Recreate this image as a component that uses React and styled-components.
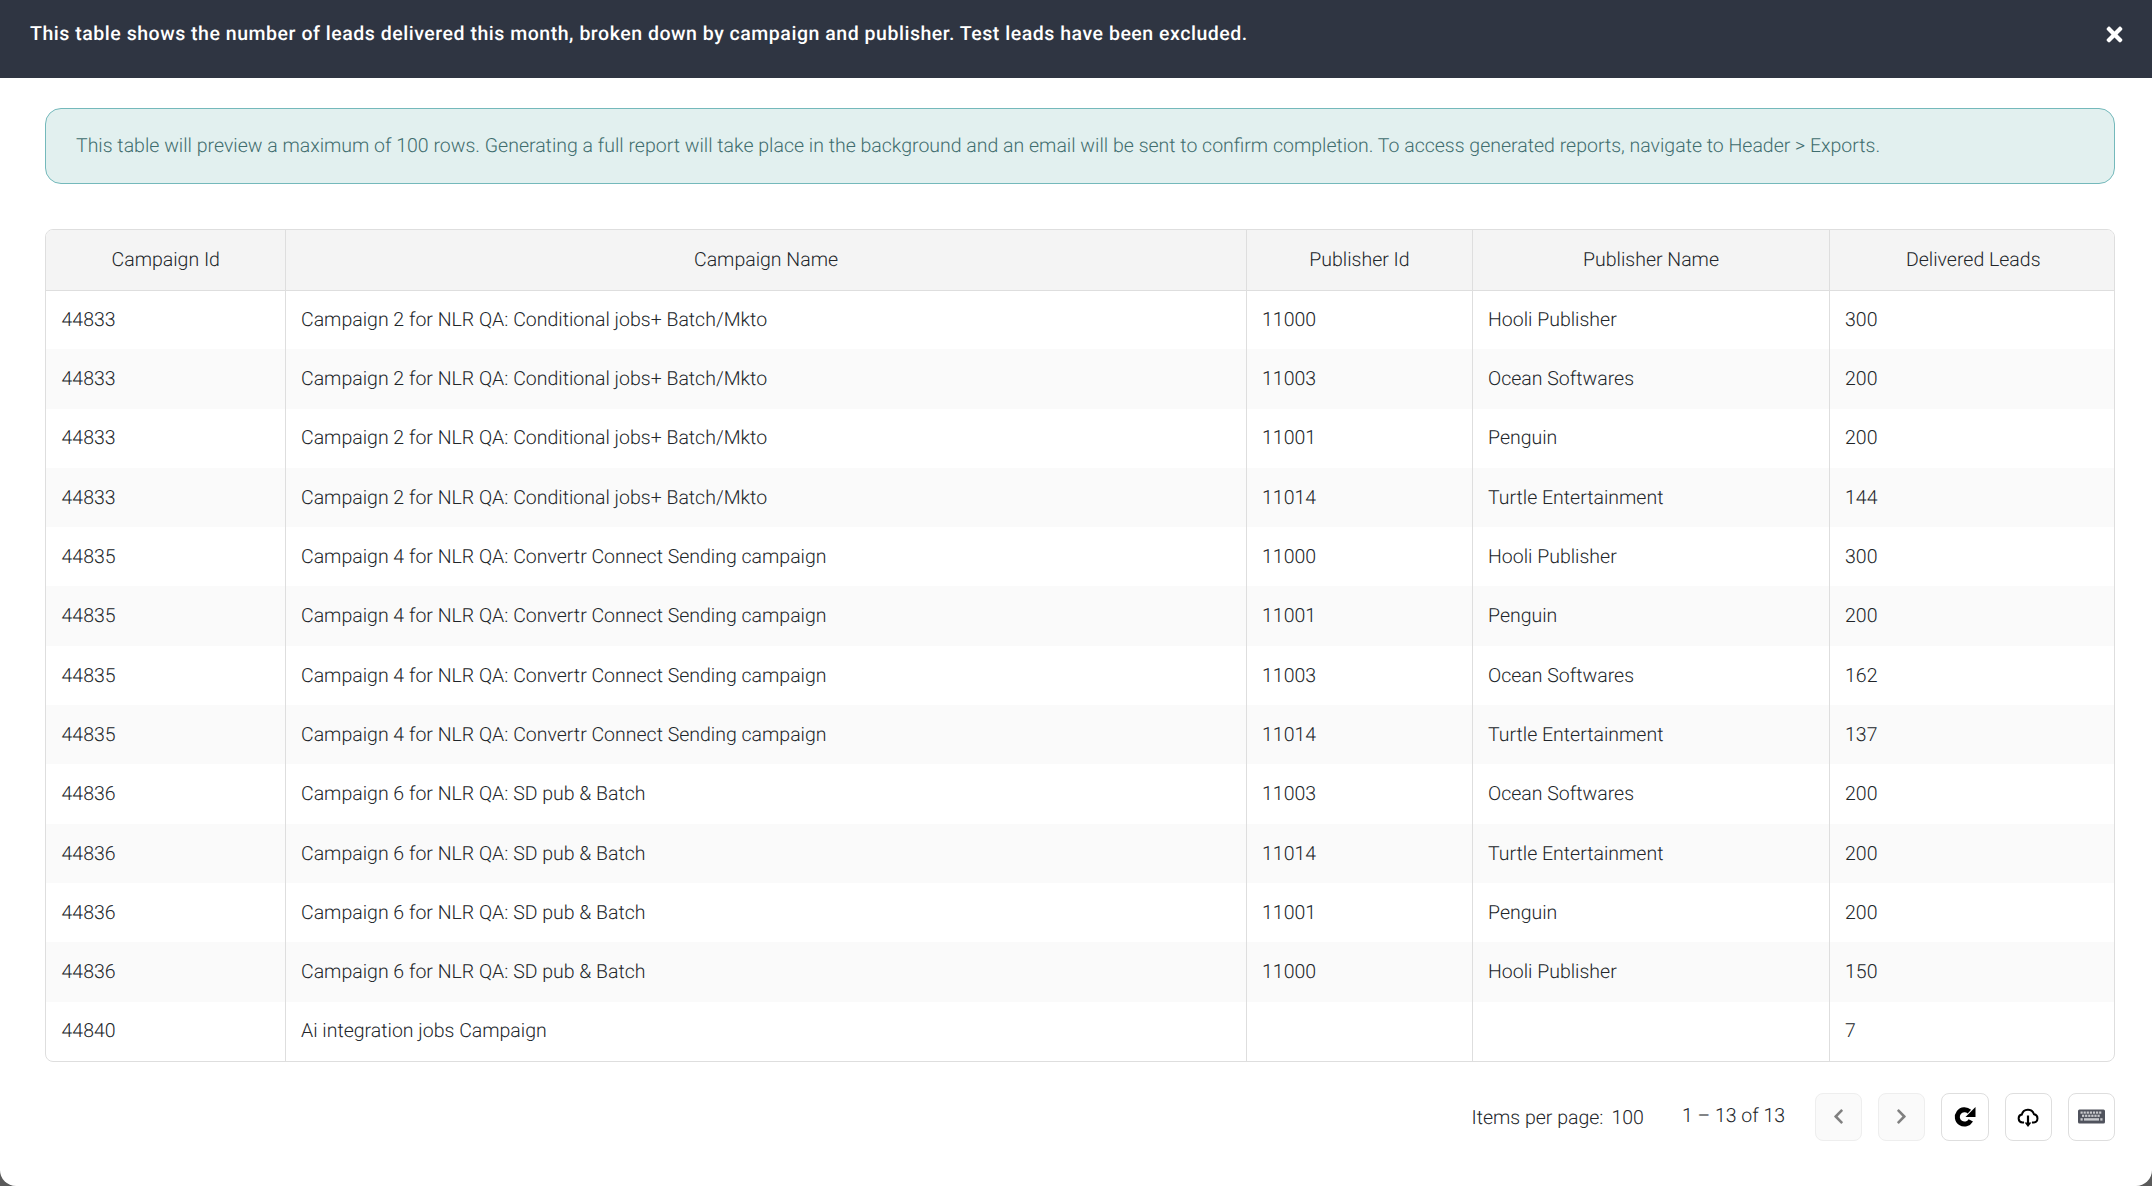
import React from 'react'
import styled, { createGlobalStyle } from 'styled-components'
import { FaTimes, FaChevronLeft, FaChevronRight } from 'react-icons/fa'

const rows = [
  ['44833', 'Campaign 2 for NLR QA: Conditional jobs+ Batch/Mkto', '11000', 'Hooli Publisher', '300'],
  ['44833', 'Campaign 2 for NLR QA: Conditional jobs+ Batch/Mkto', '11003', 'Ocean Softwares', '200'],
  ['44833', 'Campaign 2 for NLR QA: Conditional jobs+ Batch/Mkto', '11001', 'Penguin', '200'],
  ['44833', 'Campaign 2 for NLR QA: Conditional jobs+ Batch/Mkto', '11014', 'Turtle Entertainment', '144'],
  ['44835', 'Campaign 4 for NLR QA: Convertr Connect Sending campaign', '11000', 'Hooli Publisher', '300'],
  ['44835', 'Campaign 4 for NLR QA: Convertr Connect Sending campaign', '11001', 'Penguin', '200'],
  ['44835', 'Campaign 4 for NLR QA: Convertr Connect Sending campaign', '11003', 'Ocean Softwares', '162'],
  ['44835', 'Campaign 4 for NLR QA: Convertr Connect Sending campaign', '11014', 'Turtle Entertainment', '137'],
  ['44836', 'Campaign 6 for NLR QA: SD pub & Batch', '11003', 'Ocean Softwares', '200'],
  ['44836', 'Campaign 6 for NLR QA: SD pub & Batch', '11014', 'Turtle Entertainment', '200'],
  ['44836', 'Campaign 6 for NLR QA: SD pub & Batch', '11001', 'Penguin', '200'],
  ['44836', 'Campaign 6 for NLR QA: SD pub & Batch', '11000', 'Hooli Publisher', '150'],
  ['44840', 'Ai integration jobs Campaign', '', '', '7'],
]

const columns = [
  { title: 'Campaign Id', width: 239 },
  { title: 'Campaign Name', width: 961 },
  { title: 'Publisher Id', width: 226 },
  { title: 'Publisher Name', width: 357 },
  { title: 'Delivered Leads', width: 287 },
]

const GlobalStyle = createGlobalStyle`
  html, body {
    margin: 0;
    padding: 0;
    background: #5a5a5a;
    font-family: Roboto, "Liberation Sans", sans-serif;
    text-rendering: geometricPrecision;
  }
`

const Modal = styled.div`
  width: 2152px;
  height: 1186px;
  background: #fff;
  border-radius: 0 0 16px 16px;
  overflow: hidden;
`

const Header = styled.header`
  height: 78px;
  box-sizing: border-box;
  background: #2f3542;
  color: #fff;
  display: flex;
  justify-content: space-between;
  padding: 22px 26px 0 30px;
  font-size: 19.5px;
  line-height: 24px;
  font-weight: 500;
  letter-spacing: 0.53px;
`

const CloseButton = styled.button`
  border: 0;
  padding: 0;
  background: none;
  color: #fff;
  height: 24px;
  display: flex;
  align-items: center;
  font-size: 23px;
`

const Body = styled.div`
  padding: 30px 37px 0 45px;
`

const Alert = styled.div`
  height: 76px;
  box-sizing: border-box;
  display: flex;
  align-items: center;
  padding: 0 30px 1px;
  background: #e2f0ef;
  border: 1px solid #74b9bb;
  border-radius: 16px;
  color: #3f6d6e;
  font-size: 19.5px;
  font-weight: 300;
`

const TableWrap = styled.div`
  margin-top: 45px;
  border: 1px solid #dedede;
  border-radius: 8px;
  overflow: hidden;
`

const Table = styled.table`
  width: 100%;
  border-collapse: collapse;
  table-layout: fixed;
  color: #212529;
  font-size: 19.5px;
  font-weight: 300;
`

const HeadCell = styled.th`
  height: 60px;
  box-sizing: border-box;
  padding: 0 0 1px 1px;
  background: #f4f4f4;
  font-weight: 300;
  text-align: center;
  border-bottom: 1px solid #dedede;
  border-left: 1px solid #dedede;
  &:first-child {
    border-left: 0;
  }
`

const Row = styled.tr`
  &:nth-child(even) td {
    background: #fafafa;
  }
`

const Cell = styled.td`
  height: 59.3px;
  padding: 0 15px 0.5px 15.5px;
  box-sizing: border-box;
  border-left: 1px solid #dedede;
  &:first-child {
    border-left: 0;
  }
`

const Footer = styled.footer`
  margin-top: 31px;
  display: flex;
  justify-content: flex-end;
  align-items: center;
  gap: 16px;
  color: #212529;
  font-size: 19.5px;
  font-weight: 300;
`

const PerPage = styled.span`
  display: flex;
  gap: 8px;
  margin-top: 2px;
  margin-right: 22px;
`

const Range = styled.span`
  margin-top: -2px;
  margin-right: 14px;
`

const IconButton = styled.button`
  width: 47.2px;
  height: 48px;
  box-sizing: border-box;
  padding: 0;
  display: flex;
  align-items: center;
  justify-content: center;
  border-radius: 8px;
  border: 1px solid ${p => (p.disabled ? '#eeeeee' : '#dedede')};
  background: ${p => (p.disabled ? '#fafafa' : '#fff')};
  color: ${p => (p.disabled ? '#808080' : '#000')};
  font-size: 17px;
`

const RefreshIcon = () => (
  <svg width="22" height="22" viewBox="0 0 22 22" fill="none">
    <path d="M16.8 14.4A7.2 7.2 0 1 1 15.4 5.6" stroke="#000" strokeWidth="5" />
    <path d="M21.5 1V11H11.5Z" fill="#000" />
  </svg>
)

const CloudDownloadIcon = () => (
  <svg width="24" height="24" viewBox="0 0 24 24" fill="none" stroke="#000" strokeWidth="2">
    <path d="M8 17.5H6.5A4 4 0 0 1 5.8 9.6 6.3 6.3 0 0 1 18 9.2 4.2 4.2 0 0 1 17.8 17.5H16" />
    <path d="M12 10.5V20" strokeWidth="2.2" />
    <path d="M8.6 17.6H15.4L12 22Z" fill="#000" stroke="none" />
  </svg>
)

const KeyboardIcon = () => {
  const keys = []
  for (let i = 0; i < 7; i++) {
    keys.push(<rect key={'a' + i} x={2.5 + i * 3.1} y="2.5" width="2.2" height="2.2" />)
    if (i < 6) keys.push(<rect key={'b' + i} x={4 + i * 3.1} y="5.7" width="2.2" height="2.2" />)
  }
  return (
    <svg width="27" height="15" viewBox="0 0 27 15" fill="#c9cace">
      <rect width="27" height="14" y="0.5" rx="1.5" fill="#50535d" />
      {keys}
      <rect x="6" y="9.2" width="15" height="2.4" />
      <rect x="2.5" y="9.2" width="2.2" height="2.4" />
      <rect x="22.3" y="9.2" width="2.2" height="2.4" />
    </svg>
  )
}

const App = () => {
  return (
    <Modal>
      <GlobalStyle />
      <Header>
        <span>This table shows the number of leads delivered this month, broken down by campaign and publisher. Test leads have been excluded.</span>
        <CloseButton aria-label="Close"><FaTimes /></CloseButton>
      </Header>
      <Body>
        <Alert>
          This table will preview a maximum of 100 rows. Generating a full report will take place in the background and an email will be sent to confirm completion. To access generated reports, navigate to Header &gt; Exports.
        </Alert>
        <TableWrap>
          <Table>
            <colgroup>
              {columns.map(col => <col key={col.title} width={col.width} />)}
            </colgroup>
            <thead>
              <tr>
                {columns.map(col => <HeadCell key={col.title}>{col.title}</HeadCell>)}
              </tr>
            </thead>
            <tbody>
              {rows.map((row, index) => (
                <Row key={index}>
                  {row.map((value, i) => <Cell key={i}>{value}</Cell>)}
                </Row>
              ))}
            </tbody>
          </Table>
        </TableWrap>
        <Footer>
          <PerPage><span>Items per page:</span><span>100</span></PerPage>
          <Range>1 – 13 of 13</Range>
          <IconButton disabled><FaChevronLeft /></IconButton>
          <IconButton disabled><FaChevronRight /></IconButton>
          <IconButton><RefreshIcon /></IconButton>
          <IconButton><CloudDownloadIcon /></IconButton>
          <IconButton><KeyboardIcon /></IconButton>
        </Footer>
      </Body>
    </Modal>
  )
}

export default App
